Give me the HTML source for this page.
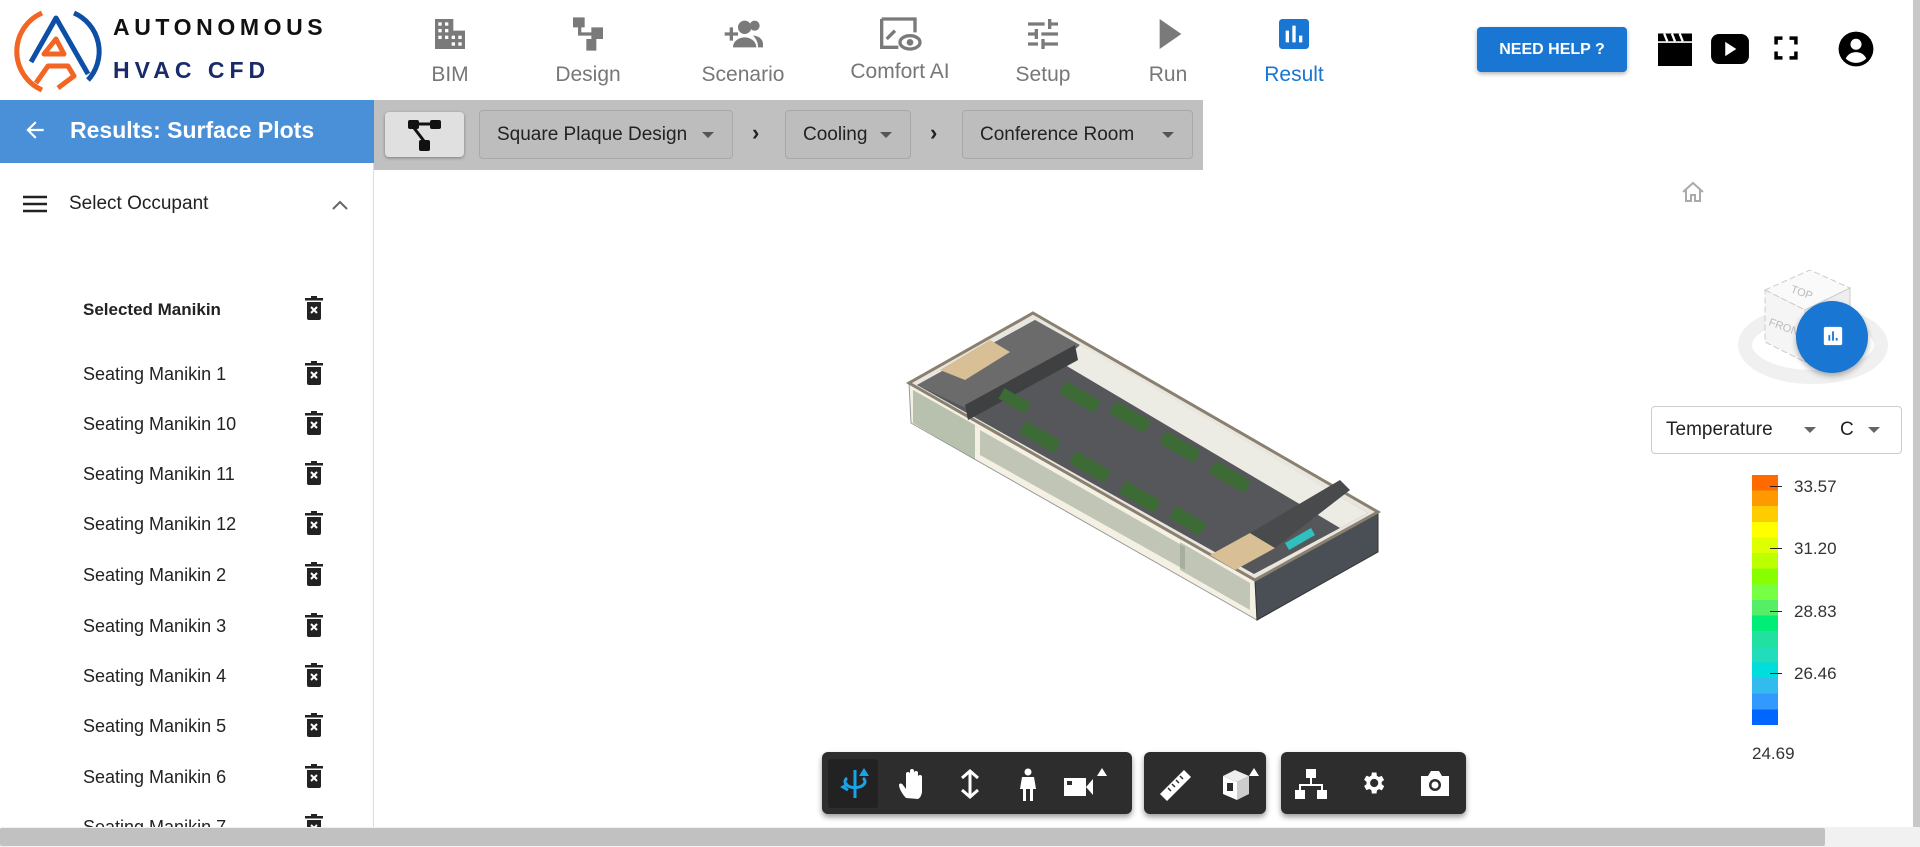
<!DOCTYPE html>
<html><head><meta charset="utf-8">
<style>
*{box-sizing:border-box;margin:0;padding:0}
body{width:1920px;height:847px;overflow:hidden;background:#fff;font-family:"Liberation Sans",Roboto,sans-serif;position:relative;color:#222}
.abs{position:absolute}
.nav{position:absolute;top:0;width:140px;text-align:center;color:#777;font-size:21px}
.nav svg{display:block;margin:14px auto 0}
.nav span{display:block;position:absolute;top:63px;width:100%}
.item{position:absolute;left:83px;font-size:18px;color:#222}
.trash{position:absolute;left:304px}
.dd{position:absolute;top:110px;height:49px;border:1px solid #a8a8a8;border-radius:4px;background:#bdbdbd;font-size:19px;color:#222;line-height:47px;padding-left:17px}
.dd i{position:absolute;right:18px;top:21px;border-left:6px solid transparent;border-right:6px solid transparent;border-top:6px solid #555}
.tb{position:absolute;top:752px;height:62px;background:#2d2d2d;border-radius:6px;box-shadow:0 3px 6px rgba(0,0,0,.4)}
.tb svg{position:absolute;top:16px}
</style></head><body>

<!-- logo -->
<svg class="abs" style="left:8px;top:4px" width="100" height="92" viewBox="0 0 100 92">
<path d="M34 9 A42 42 0 0 0 34 86" fill="none" stroke="#f26522" stroke-width="5"/>
<path d="M66 9 A42 42 0 0 1 80 76" fill="none" stroke="#0d4ea6" stroke-width="5"/>
<path d="M23 58 L48 14 L80 70" fill="none" stroke="#0d4ea6" stroke-width="5" stroke-linejoin="round"/>
<path d="M28 79 L40 62 L60 62 L66 72 L50 84 M36 50 L48 35 L56 50 Z" fill="none" stroke="#f26522" stroke-width="5" stroke-linejoin="round"/>
</svg>
<div class="abs" style="left:113px;top:14px;font-size:23px;font-weight:bold;letter-spacing:4.6px;color:#111">AUTONOMOUS</div>
<div class="abs" style="left:113px;top:57px;font-size:23px;font-weight:bold;letter-spacing:5px;color:#1a2a6a">HVAC CFD</div>

<!-- nav -->
<div class="nav" style="left:380px"><svg width="40" height="40" viewBox="0 0 24 24"><path fill="#7a7a7a" d="M3 3h11v7h7v11H3z"/><g fill="#fff"><rect x="5" y="5" width="2" height="2"/><rect x="9" y="5" width="2" height="2"/><rect x="5" y="9" width="2" height="2"/><rect x="9" y="9" width="2" height="2"/><rect x="5" y="13" width="2" height="2"/><rect x="9" y="13" width="2" height="2"/><rect x="13" y="13" width="2" height="2"/><rect x="17" y="13" width="2" height="2"/><rect x="13" y="17" width="2" height="2"/><rect x="17" y="17" width="2" height="2"/></g></svg><span>BIM</span></div>
<div class="nav" style="left:518px"><svg width="40" height="40" viewBox="0 0 24 24"><path fill="#7a7a7a" d="M3 2h7v6H8v3h6V8h7v7h-4v7h-6v-7h3v-2H6V8H3z"/></svg><span>Design</span></div>
<div class="nav" style="left:673px"><svg width="44" height="40" viewBox="0 0 26 24"><path fill="#7a7a7a" d="M2 11h3V8h2v3h3v2H7v3H5v-3H2z"/><circle cx="14" cy="8" r="4" fill="#7a7a7a"/><circle cx="20" cy="7" r="3" fill="#7a7a7a"/><path fill="#7a7a7a" d="M7 20c0-4 4-6 7-6s7 2 7 6zM19 13c3 0 6 2 6 5v2h-3c0-3-1-5-3-7z"/></svg><span>Scenario</span></div>
<div class="nav" style="left:830px"><svg width="46" height="40" viewBox="0 0 26 24"><path fill="none" stroke="#7a7a7a" stroke-width="2" d="M2 3h20v8M2 3v17h10"/><path fill="none" stroke="#7a7a7a" stroke-width="2" d="M5 15l5-5"/><ellipse cx="19" cy="17" rx="6" ry="4" fill="none" stroke="#7a7a7a" stroke-width="2"/><circle cx="19" cy="17" r="2" fill="#7a7a7a"/></svg><span style="top:60px">Comfort AI</span></div>
<div class="nav" style="left:973px"><svg width="40" height="40" viewBox="0 0 24 24"><path fill="#7a7a7a" d="M3 17v2h6v-2zM3 5v2h10V5zm10 16v-2h8v-2h-8v-2h-2v6zM7 9v2H3v2h4v2h2V9zm14 4v-2H11v2zm-6-4h2V7h4V5h-4V3h-2z"/></svg><span>Setup</span></div>
<div class="nav" style="left:1098px"><svg width="40" height="40" viewBox="0 0 24 24"><path fill="#7a7a7a" d="M7 3l13 9-13 9z"/></svg><span>Run</span></div>
<div class="nav" style="left:1224px;color:#1976d2"><svg width="40" height="40" viewBox="0 0 24 24"><rect x="3" y="3" width="18" height="18" rx="2" fill="#1976d2"/><path fill="#fff" d="M7 10h2v7H7zm4-3h2v10h-2zm4 6h2v4h-2z"/></svg><span>Result</span></div>

<div class="abs" style="left:1477px;top:27px;width:150px;height:45px;background:#1976d2;border-radius:4px;color:#fff;font-size:16px;font-weight:bold;text-align:center;line-height:45px;box-shadow:0 2px 4px rgba(0,0,0,.3)">NEED HELP ?</div>
<svg class="abs" style="left:1656px;top:32px" width="38" height="34" viewBox="0 0 24 22"><path d="M1 7h22v15H1z M1 1h22v5H1z" fill="#000"/><path d="M5 1l2 5M10 1l2 5M15 1l2 5" stroke="#fff" stroke-width="1.5"/></svg>
<svg class="abs" style="left:1711px;top:34px" width="38" height="30" viewBox="0 0 24 19"><rect x="0" y="0" width="24" height="19" rx="5" fill="#000"/><path d="M9 5l7 4.5-7 4.5z" fill="#fff"/></svg>
<svg class="abs" style="left:1772px;top:34px" width="28" height="28" viewBox="0 0 24 24"><path d="M2 2h7v3H5v4H2zM15 2h7v7h-3V5h-4zM2 15h3v4h4v3H2zM19 15h3v7h-7v-3h4z" fill="#000"/></svg>
<svg class="abs" style="left:1837px;top:30px" width="38" height="38" viewBox="0 0 24 24"><circle cx="12" cy="12" r="11" fill="#000"/><circle cx="12" cy="9" r="3.5" fill="#fff"/><path d="M5.5 18c1.5-3 4-4 6.5-4s5 1 6.5 4a9 9 0 0 1-13 0z" fill="#fff"/></svg>

<!-- sidebar -->
<div class="abs" style="left:0;top:100px;width:374px;height:63px;background:#4a90d9"></div>
<svg class="abs" style="left:22px;top:117px" width="26" height="26" viewBox="0 0 24 24"><path d="M20 11H7.8l5.6-5.6L12 4l-8 8 8 8 1.4-1.4L7.8 13H20z" fill="#fff"/></svg>
<div class="abs" style="left:70px;top:117px;color:#fff;font-size:23px;font-weight:bold">Results: Surface Plots</div>
<div class="abs" style="left:373px;top:163px;width:1px;height:664px;background:#ddd"></div>
<svg class="abs" style="left:23px;top:194px" width="24" height="20" viewBox="0 0 24 20"><path d="M0 3h24M0 10h24M0 17h24" stroke="#222" stroke-width="2.4"/></svg>
<div class="abs" style="left:69px;top:193px;font-size:19px">Select Occupant</div>
<svg class="abs" style="left:331px;top:198px" width="18" height="14" viewBox="0 0 18 14"><path d="M2 11l7-7 7 7" fill="none" stroke="#666" stroke-width="2"/></svg>
<div class="item" style="top:300px;font-weight:bold;font-size:17px">Selected Manikin</div>
<div class="item" style="top:364px">Seating Manikin 1</div>
<div class="item" style="top:414px">Seating Manikin 10</div>
<div class="item" style="top:464px">Seating Manikin 11</div>
<div class="item" style="top:514px">Seating Manikin 12</div>
<div class="item" style="top:565px">Seating Manikin 2</div>
<div class="item" style="top:616px">Seating Manikin 3</div>
<div class="item" style="top:666px">Seating Manikin 4</div>
<div class="item" style="top:716px">Seating Manikin 5</div>
<div class="item" style="top:767px">Seating Manikin 6</div>
<div class="item" style="top:817px">Seating Manikin 7</div>
<svg width="0" height="0" style="position:absolute"><defs><symbol id="tr" viewBox="0 0 20 24"><rect x="1" y="2" width="18" height="2.5" fill="#222"/><rect x="7" y="0" width="6" height="3" fill="#222"/><path d="M3 6h14v16a2 2 0 0 1-2 2H5a2 2 0 0 1-2-2z" fill="#222"/><path d="M7 11l6 6M13 11l-6 6" stroke="#fff" stroke-width="2"/></symbol></defs></svg>
<svg class="trash" style="top:296px" width="20" height="24"><use href="#tr"/></svg>
<svg class="trash" style="top:361px" width="20" height="24"><use href="#tr"/></svg>
<svg class="trash" style="top:411px" width="20" height="24"><use href="#tr"/></svg>
<svg class="trash" style="top:461px" width="20" height="24"><use href="#tr"/></svg>
<svg class="trash" style="top:511px" width="20" height="24"><use href="#tr"/></svg>
<svg class="trash" style="top:562px" width="20" height="24"><use href="#tr"/></svg>
<svg class="trash" style="top:613px" width="20" height="24"><use href="#tr"/></svg>
<svg class="trash" style="top:663px" width="20" height="24"><use href="#tr"/></svg>
<svg class="trash" style="top:713px" width="20" height="24"><use href="#tr"/></svg>
<svg class="trash" style="top:764px" width="20" height="24"><use href="#tr"/></svg>
<svg class="trash" style="top:814px" width="20" height="24"><use href="#tr"/></svg>

<!-- breadcrumb -->
<div class="abs" style="left:374px;top:100px;width:829px;height:70px;background:#c0c0c0"></div>
<div class="abs" style="left:385px;top:112px;width:79px;height:45px;background:#e0e0e0;border-radius:4px;box-shadow:0 1px 3px rgba(0,0,0,.35)"></div>
<svg class="abs" style="left:406px;top:118px" width="38" height="34" viewBox="0 0 38 34"><rect x="2" y="2" width="11" height="9" rx="2" fill="#111"/><rect x="24" y="2" width="11" height="9" rx="2" fill="#111"/><rect x="13" y="22" width="11" height="11" rx="2" fill="#111"/><path d="M13 6h11M8 10l10 13" stroke="#111" stroke-width="3"/></svg>
<div class="dd" style="left:479px;width:254px">Square Plaque Design<i></i></div>
<div class="abs" style="left:752px;top:120px;font-size:22px;font-weight:bold">›</div>
<div class="dd" style="left:785px;width:126px">Cooling<i></i></div>
<div class="abs" style="left:930px;top:120px;font-size:22px;font-weight:bold">›</div>
<div class="dd" style="left:962px;width:231px">Conference Room<i></i></div>

<!-- building model -->
<svg class="abs" style="left:880px;top:300px" width="520" height="330" viewBox="880 300 520 330">
<polygon points="909,383 911,423 1257,620 1255,580" fill="#f4f1e4" stroke="#999"/>
<polygon points="1255,580 1257,620 1378,552 1378,512" fill="#4a4e55" stroke="#333"/>
<polygon points="1033,313 1378,512 1255,580 909,383" fill="#e8e6df" stroke="#8a8070" stroke-width="3"/>
<polygon points="1035,320 1368,513 1254,574 917,385" fill="#56575a"/>
<polygon points="1080,345 1368,513 1340,528 1060,362" fill="#ecebe4"/>
<polygon points="1035,320 1080,345 970,410 917,385" fill="#6b6b6b"/>
<polygon points="965,405 1075,345 1078,360 968,420" fill="#3f4042"/>
<polygon points="940,370 990,340 1010,352 965,380" fill="#d8bf96"/>
<polygon points="1210,555 1250,533 1275,548 1235,570" fill="#d8bf96"/>
<polygon points="1250,533 1340,480 1350,490 1275,548" fill="#494a4c"/>
<polygon points="913,390 975,425 975,460 913,423" fill="#8fa08a" opacity=".6"/>
<polygon points="980,430 1185,547 1185,570 980,455" fill="#8b9a87" opacity=".5"/>
<polygon points="1180,542 1250,583 1250,610 1180,570" fill="#8b9a87" opacity=".5"/>
<g fill="#3c6b35"><rect x="1060" y="390" width="40" height="14" transform="rotate(30 1080 397)"/><rect x="1110" y="410" width="40" height="14" transform="rotate(30 1130 417)"/><rect x="1160" y="440" width="40" height="14" transform="rotate(30 1180 447)"/><rect x="1210" y="470" width="40" height="14" transform="rotate(30 1230 477)"/><rect x="1020" y="430" width="40" height="14" transform="rotate(30 1040 437)"/><rect x="1070" y="460" width="40" height="14" transform="rotate(30 1090 467)"/><rect x="1120" y="490" width="40" height="14" transform="rotate(30 1140 497)"/><rect x="1170" y="515" width="35" height="14" transform="rotate(30 1190 522)"/><rect x="1000" y="395" width="30" height="12" transform="rotate(30 1015 400)"/></g>
<g fill="#30c0c0"><rect x="1285" y="535" width="30" height="8" transform="rotate(-30 1300 539)"/></g>
</svg>

<!-- right widgets -->
<svg class="abs" style="left:1680px;top:181px" width="26" height="22" viewBox="0 0 26 22"><path d="M3 11L13 2l10 9M6 9v11h5v-6h4v6h5V9" fill="none" stroke="#aaa" stroke-width="2"/></svg>
<svg class="abs" style="left:1725px;top:270px" width="190" height="140" viewBox="0 0 190 140">
<ellipse cx="88" cy="75" rx="68" ry="32" fill="none" stroke="#f0f0f0" stroke-width="14"/>
<polygon points="40,20 85,0 125,18 80,40" fill="#fafafa" stroke="#ccc" stroke-dasharray="6 3"/>
<polygon points="40,20 80,40 80,92 40,72" fill="#f5f5f5" stroke="#ccc" stroke-dasharray="6 3"/>
<polygon points="80,40 125,18 125,70 80,92" fill="#eee" stroke="#ccc"/>
<text x="65" y="22" font-size="11" fill="#bbb" font-family="Liberation Sans" transform="rotate(20 65 22)">TOP</text>
<text x="43" y="55" font-size="11" fill="#bbb" font-family="Liberation Sans" transform="rotate(20 43 55)">FRONT</text>
</svg>
<div class="abs" style="left:1796px;top:301px;width:72px;height:72px;border-radius:50%;background:#1976d2;box-shadow:0 3px 6px rgba(0,0,0,.3)"></div>
<svg class="abs" style="left:1822px;top:325px" width="22" height="22" viewBox="0 0 24 24"><rect x="2" y="2" width="20" height="20" rx="2" fill="#fff"/><path fill="#1976d2" d="M7 11h2v6H7zm4-4h2v10h-2zm4 7h2v3h-2z"/></svg>
<div class="abs" style="left:1651px;top:406px;width:251px;height:48px;border:1px solid #ccc;border-radius:4px;background:#fff;font-size:19px;line-height:46px">
<span class="abs" style="left:14px">Temperature</span>
<i class="abs" style="left:152px;top:20px;border-left:6px solid transparent;border-right:6px solid transparent;border-top:6px solid #666"></i>
<span class="abs" style="left:188px">C</span>
<i class="abs" style="left:216px;top:20px;border-left:6px solid transparent;border-right:6px solid transparent;border-top:6px solid #666"></i>
</div>
<div class="abs" style="left:1752px;top:475px;width:26px;height:250px;background:linear-gradient(#ff6a00 0 6.25%,#ff9900 6.25% 12.5%,#ffcc00 12.5% 18.75%,#ffff00 18.75% 25%,#ddff00 25% 31.25%,#bbff00 31.25% 37.5%,#88ff00 37.5% 43.75%,#77ff44 43.75% 50%,#55ee66 50% 56.25%,#00ee77 56.25% 62.5%,#22e0a0 62.5% 68.75%,#22ddbb 68.75% 75%,#00dddd 75% 81.25%,#33bbee 81.25% 87.5%,#3399ff 87.5% 93.75%,#0066ff 93.75%)"></div>
<div class="abs" style="left:1770px;top:486px;width:12px;height:1px;background:#222"></div>
<div class="abs" style="left:1770px;top:548px;width:12px;height:1px;background:#222"></div>
<div class="abs" style="left:1770px;top:611px;width:12px;height:1px;background:#222"></div>
<div class="abs" style="left:1770px;top:673px;width:12px;height:1px;background:#222"></div>
<div class="abs" style="left:1794px;top:477px;font-size:17px;color:#333">33.57</div>
<div class="abs" style="left:1794px;top:539px;font-size:17px;color:#333">31.20</div>
<div class="abs" style="left:1794px;top:602px;font-size:17px;color:#333">28.83</div>
<div class="abs" style="left:1794px;top:664px;font-size:17px;color:#333">26.46</div>
<div class="abs" style="left:1752px;top:744px;font-size:17px;color:#333">24.69</div>

<!-- toolbar -->
<div class="tb" style="left:822px;width:310px">
<div class="abs" style="left:6px;top:7px;width:50px;height:49px;background:#222;border-radius:3px"></div>
<svg style="left:12px" width="40" height="32" viewBox="0 0 40 32"><path d="M21 2v28" stroke="#1aa3e8" stroke-width="3"/><path d="M13 10a10 6 0 1 0 16 0" fill="none" stroke="#1aa3e8" stroke-width="3"/><path d="M14 16l-5 3 5 3" fill="none" stroke="#1aa3e8" stroke-width="3"/><path d="M30 0l5 8h-10z" fill="#1aa3e8"/></svg>
<svg style="left:76px" width="30" height="32" viewBox="0 0 30 32"><path d="M8 30c-4-4-7-10-7-13 0-2 3-2 4 0l3 4V6a2 2 0 0 1 4 0v10-13a2 2 0 0 1 4 0v13-11a2 2 0 0 1 4 0v12-8a2 2 0 0 1 4 0v14c0 4-2 7-4 8z" fill="#fff"/></svg>
<svg style="left:136px" width="24" height="32" viewBox="0 0 24 32"><path d="M12 3v26M4 10l8-7 8 7M4 22l8 7 8-7" fill="none" stroke="#fff" stroke-width="3"/></svg>
<svg style="left:196px" width="20" height="34" viewBox="0 0 20 34"><circle cx="10" cy="4" r="3.5" fill="#fff"/><path d="M4 9h12l2 12h-3v12h-3V21h-4v12H5V21H2z" fill="#fff"/></svg>
<svg style="left:240px" width="50" height="32" viewBox="0 0 50 32"><rect x="2" y="10" width="22" height="18" fill="#fff"/><rect x="5" y="13" width="5" height="4" fill="#2d2d2d"/><path d="M24 19l7-8v16z" fill="#fff"/><path d="M40 0l5 8h-10z" fill="#fff"/></svg>
</div>
<div class="tb" style="left:1144px;width:122px">
<svg style="left:14px" width="36" height="34" viewBox="0 0 36 34"><path d="M2 26L26 2l7 7L9 33z" fill="#fff"/><path d="M10 20l3 3M14 16l3 3M18 12l3 3M22 8l3 3" stroke="#2d2d2d" stroke-width="1.5"/></svg>
<svg style="left:76px" width="40" height="34" viewBox="0 0 40 34"><path d="M3 8l14 6v18L3 26z" fill="#fff"/><path d="M17 14l12-6v18l-12 6z" fill="#ccc"/><path d="M3 8l12-6 14 6-12 6z" fill="#eee"/><rect x="7" y="15" width="6" height="8" fill="#2d2d2d"/><path d="M34 0l5 8h-10z" fill="#fff"/></svg>
</div>
<div class="tb" style="left:1281px;width:185px">
<svg style="left:14px" width="32" height="32" viewBox="0 0 32 32"><rect x="11" y="1" width="10" height="9" fill="#fff"/><path d="M16 10v6M5 22v-5h22v5" stroke="#fff" stroke-width="2" fill="none"/><rect x="0" y="22" width="10" height="9" fill="#fff"/><rect x="22" y="22" width="10" height="9" fill="#fff"/></svg>
<svg style="left:78px" width="28" height="30" viewBox="0 0 24 24"><path fill="#fff" d="M19.4 13a7.5 7.5 0 0 0 0-2l2.1-1.6-2-3.5-2.5 1a7 7 0 0 0-1.7-1L15 3h-4l-.4 2.7a7 7 0 0 0-1.7 1l-2.5-1-2 3.5L6.5 11a7.5 7.5 0 0 0 0 2l-2.1 1.6 2 3.5 2.5-1a7 7 0 0 0 1.7 1L11 21h4l.4-2.7a7 7 0 0 0 1.7-1l2.5 1 2-3.5zM13 15.5a3.5 3.5 0 1 1 0-7 3.5 3.5 0 0 1 0 7z"/></svg>
<svg style="left:138px" width="32" height="30" viewBox="0 0 32 30"><path d="M2 8h7l3-5h8l3 5h7v20H2z" fill="#fff"/><circle cx="16" cy="17" r="6" fill="#2d2d2d"/><circle cx="16" cy="17" r="3.5" fill="#fff"/></svg>
</div>

<!-- scrollbars -->
<div class="abs" style="left:1913px;top:0;width:7px;height:827px;background:#c8c8c8"></div>
<div class="abs" style="left:0;top:827px;width:1920px;height:20px;background:#f1f1f1"></div>
<div class="abs" style="left:0;top:828px;width:1825px;height:18px;background:#c1c1c1;border-radius:2px"></div>
</body></html>
